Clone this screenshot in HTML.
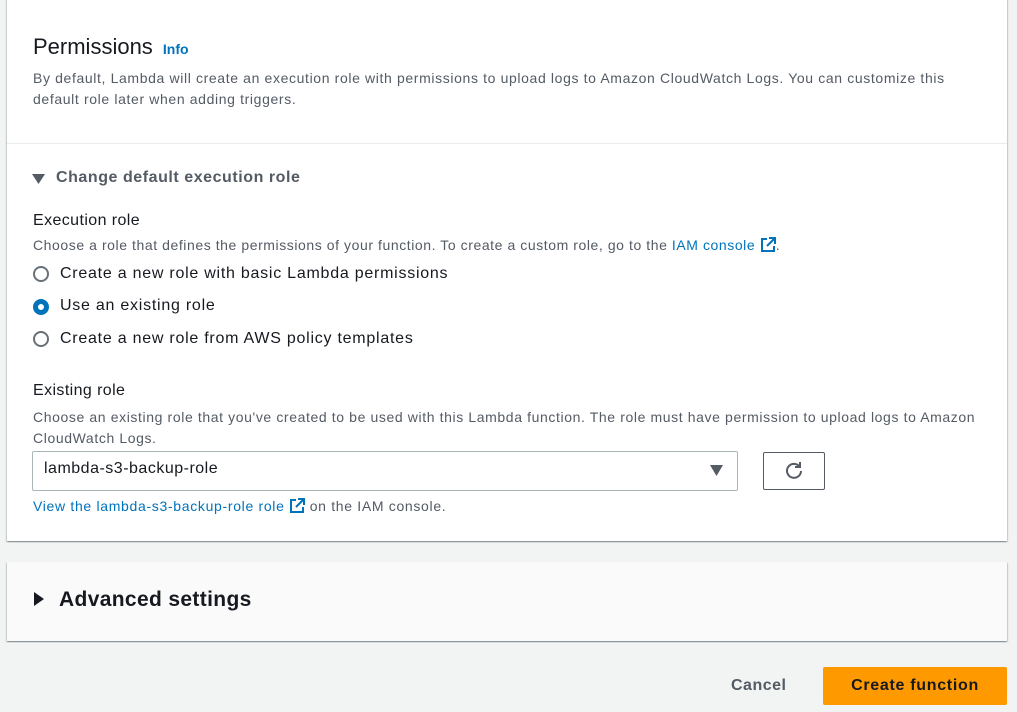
<!DOCTYPE html>
<html><head><meta charset="utf-8"><style>
*{margin:0;padding:0;box-sizing:border-box}
body{width:1017px;height:712px;background:#f2f3f3;font-family:"Liberation Sans",sans-serif;color:#16191f;position:relative;overflow:hidden}
.a{position:absolute;white-space:nowrap}
.card{position:absolute;left:7px;width:1000px;background:#fff;box-shadow:0 1px 1px 0 rgba(0,28,36,.3),1px 1px 1px 0 rgba(0,28,36,.15),-1px 1px 1px 0 rgba(0,28,36,.15)}
.s{font-size:14px;color:#545b64;letter-spacing:.6px}
.r{font-size:16px;letter-spacing:.75px}
.rad{position:absolute;width:16px;height:16px;border:2px solid #687078;border-radius:50%;left:33px}
.ln{color:#0073bb}
.ext{display:inline-block;width:16px;height:16px;vertical-align:-3px}
</style></head><body>
<div class="card" style="top:-5px;height:546px"></div>
<div style="position:absolute;left:7px;top:143px;width:1000px;height:1px;background:#eaeded"></div>
<div class="a" style="left:33px;top:34px;font-size:22px;color:#16191f">Permissions <span style="font-size:14px;font-weight:bold;color:#0073bb;margin-left:4px">Info</span></div>
<div class="a s" style="left:33px;top:68px;line-height:21px;letter-spacing:.63px">By default, Lambda will create an execution role with permissions to upload logs to Amazon CloudWatch Logs. You can customize this<br>default role later when adding triggers.</div>
<svg class="a" style="left:32px;top:173px" width="14" height="12"><polygon points="0,1 13,1 6.5,11" fill="#545b64"/></svg>
<div class="a" style="left:56px;top:169px;font-size:16px;font-weight:bold;color:#545b64;letter-spacing:.55px">Change default execution role</div>
<div class="a" style="left:33px;top:212px;font-size:16px;letter-spacing:.4px">Execution role</div>
<div class="a s" style="left:33px;top:237px;letter-spacing:.57px">Choose a role that defines the permissions of your function. To create a custom role, go to the <span class="ln">IAM console</span> <svg class="ext" viewBox="0 0 16 16"><path d="M7 2H2v12h12V9" fill="none" stroke="#0073bb" stroke-width="2"/><path d="M9 1h6v6M15 1L7 9" fill="none" stroke="#0073bb" stroke-width="2"/></svg>.</div>
<div class="rad" style="top:266px"></div>
<div class="a r" style="left:60px;top:265px">Create a new role with basic Lambda permissions</div>
<div class="rad" style="top:299px;border:5px solid #0073bb"></div>
<div class="a r" style="left:60px;top:297px">Use an existing role</div>
<div class="rad" style="top:331px"></div>
<div class="a r" style="left:60px;top:330px">Create a new role from AWS policy templates</div>
<div class="a" style="left:33px;top:382px;font-size:16px;letter-spacing:.4px">Existing role</div>
<div class="a s" style="left:33px;top:407px;line-height:21px;letter-spacing:.61px">Choose an existing role that you've created to be used with this Lambda function. The role must have permission to upload logs to Amazon<br>CloudWatch Logs.</div>
<div style="position:absolute;left:32px;top:451px;width:706px;height:40px;border:1px solid #aab7b8;border-radius:2px"></div>
<div class="a" style="left:44px;top:460px;font-size:16px;letter-spacing:.5px">lambda-s3-backup-role</div>
<svg class="a" style="left:710px;top:465px" width="13" height="11"><polygon points="0,0 13,0 6.5,11" fill="#545b64"/></svg>
<div style="position:absolute;left:763px;top:452px;width:62px;height:38px;border:1px solid #545b64;border-radius:2px;background:#fff"></div>
<svg class="a" style="left:783px;top:460px" width="22" height="22" viewBox="0 0 22 22"><path d="M16.5 6.5A7 7 0 1 0 18 11" fill="none" stroke="#545b64" stroke-width="2"/><path d="M17 2v5h-5" fill="none" stroke="#545b64" stroke-width="2"/></svg>
<div class="a" style="left:33px;top:498px;font-size:14px;color:#545b64;letter-spacing:.68px"><span class="ln">View the lambda-s3-backup-role role</span> <svg class="ext" viewBox="0 0 16 16"><path d="M7 2H2v12h12V9" fill="none" stroke="#0073bb" stroke-width="2"/><path d="M9 1h6v6M15 1L7 9" fill="none" stroke="#0073bb" stroke-width="2"/></svg> on the IAM console.</div>
<div class="card" style="top:562px;height:79px;background:#fafafa"></div>
<svg class="a" style="left:34px;top:592px" width="10" height="14"><polygon points="0,0 10,7 0,14" fill="#16191f"/></svg>
<div class="a" style="left:59px;top:588px;font-size:21px;font-weight:bold;letter-spacing:.35px">Advanced settings</div>
<div class="a" style="left:731px;top:677px;font-size:16px;font-weight:bold;color:#545b64;letter-spacing:.5px">Cancel</div>
<div style="position:absolute;left:823px;top:667px;width:184px;height:38px;background:#ff9900;border-radius:2px"></div>
<div class="a" style="left:823px;top:677px;width:184px;text-align:center;font-size:16px;font-weight:bold;color:#16191f;letter-spacing:.7px">Create function</div>
</body></html>
